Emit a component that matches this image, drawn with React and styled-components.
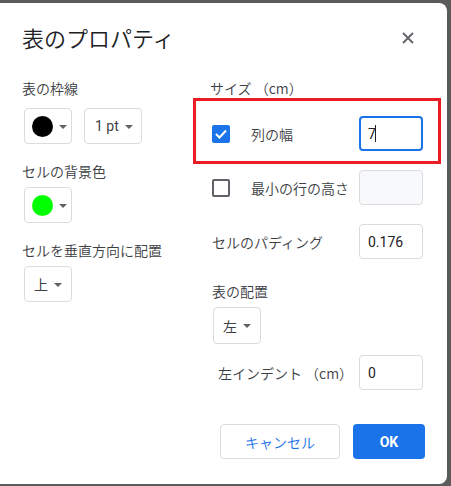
import React from "react";
import styled, { createGlobalStyle } from "styled-components";

const GlobalStyle = createGlobalStyle`
	html, body {
		margin: 0;
		padding: 0;
		background: #5b5b5b;
		font-family: Roboto, "Noto Sans CJK JP", sans-serif;
	}
	#root {
		height: 486px;
		overflow: hidden;
	}
`;

export default function App() {
	return (
		<>
			<GlobalStyle />
			<Backdrop>
				<Dialog>
					<Header>
						<Title>表のプロパティ</Title>
						<CloseButton aria-label="閉じる">
							<svg width="12" height="12" viewBox="0 0 12 12">
								<path d="M1 1 L11 11 M11 1 L1 11" stroke="#5f6368" strokeWidth="1.8" />
							</svg>
						</CloseButton>
					</Header>
					<Body>
						<LeftColumn>
							<Group spacing={12}>
								<Label>表の枠線</Label>
								<ButtonRow>
									<Dropdown>
										<Swatch color="#000000" />
										<Caret />
									</Dropdown>
									<Dropdown wide>
										<DropText>1 pt</DropText>
										<Caret />
									</Dropdown>
								</ButtonRow>
							</Group>
							<Group>
								<Label>セルの背景色</Label>
								<ButtonRow>
									<Dropdown>
										<Swatch color="#00ff00" />
										<Caret />
									</Dropdown>
								</ButtonRow>
							</Group>
							<Group>
								<Label>セルを垂直方向に配置</Label>
								<ButtonRow>
									<Dropdown>
										<DropText>上</DropText>
										<Caret />
									</Dropdown>
								</ButtonRow>
							</Group>
						</LeftColumn>
						<RightColumn>
							<Label>サイズ （cm）</Label>
							<Highlight>
								<FieldRow>
									<Checkbox checked>
										<svg width="12" height="10" viewBox="0 0 12 10">
											<path d="M1 5 L4.5 8.5 L11 1.5" fill="none" stroke="#fff" strokeWidth="2" />
										</svg>
									</Checkbox>
									<FieldLabel>列の幅</FieldLabel>
									<Input focused>
										7<CaretLine />
									</Input>
								</FieldRow>
							</Highlight>
							<FieldRow top={19}>
								<Checkbox />
								<FieldLabel>最小の行の高さ</FieldLabel>
								<Input disabled />
							</FieldRow>
							<FieldRow top={19}>
								<FieldLabel flush>セルのパディング</FieldLabel>
								<Input>0.176</Input>
							</FieldRow>
							<Label top={24}>表の配置</Label>
							<Dropdown indent>
								<DropText>左</DropText>
								<Caret />
							</Dropdown>
							<FieldRow top={11}>
								<FieldLabel flush indent>
									左インデント （cm）
								</FieldLabel>
								<Input>0</Input>
							</FieldRow>
						</RightColumn>
					</Body>
					<Footer>
						<CancelButton>キャンセル</CancelButton>
						<OkButton>OK</OkButton>
					</Footer>
				</Dialog>
			</Backdrop>
		</>
	);
}

const Backdrop = styled.div`
	padding-top: 3px;
`;

const Dialog = styled.div`
	width: 447px;
	height: 481px;
	box-sizing: border-box;
	background: #fff;
	border-radius: 0 8px 8px 0;
	padding: 0 22px;
	display: flex;
	flex-direction: column;
`;

const Header = styled.div`
	display: flex;
	align-items: center;
	justify-content: space-between;
	padding-top: 20px;
	height: 28px;
`;

const Title = styled.h1`
	margin: 0;
	font-size: 22px;
	font-weight: 350;
	line-height: 28px;
	color: #202124;
	font-family: "Noto Sans CJK JP", sans-serif;
`;

const CloseButton = styled.div`
	width: 24px;
	height: 24px;
	display: flex;
	align-items: center;
	justify-content: center;
	margin-right: 5px;
	margin-top: 2px;
`;

const Body = styled.div`
	display: grid;
	grid-template-columns: 188px 1fr;
	margin-top: 29px;
`;

const LeftColumn = styled.div`
	display: flex;
	flex-direction: column;
	gap: 19px;
`;

const RightColumn = styled.div`
	display: flex;
	flex-direction: column;
	align-items: flex-start;
	padding-right: 2px;
`;

const Group = styled.div`
	display: flex;
	flex-direction: column;
	gap: ${(p) => p.spacing || 8}px;
`;

const Label = styled.div`
	font-size: 14px;
	font-weight: 350;
	line-height: 16px;
	color: #3c4043;
	font-family: "Noto Sans CJK JP", sans-serif;
	margin-top: ${(p) => p.top || 0}px;
	margin-left: ${(p) => (p.top ? 2 : 0)}px;
`;

const ButtonRow = styled.div`
	display: flex;
	gap: 12px;
	padding-left: 2px;
`;

const Dropdown = styled.div`
	box-sizing: border-box;
	width: ${(p) => (p.wide ? 58 : 48)}px;
	height: ${(p) => (p.indent ? 37 : 36)}px;
	border: 1px solid #dadce0;
	border-radius: 4px;
	display: flex;
	align-items: center;
	padding-left: ${(p) => (p.wide ? 8 : 7)}px;
	gap: 6px;
	margin-top: ${(p) => (p.indent ? 8 : 0)}px;
	margin-left: ${(p) => (p.indent ? 3 : 0)}px;
`;

const Swatch = styled.span`
	width: 21px;
	height: 21px;
	border-radius: 50%;
	background: ${(p) => p.color};
`;

const DropText = styled.span`
	font-size: 14px;
	color: #3c4043;
	font-family: Roboto, "Noto Sans CJK JP", sans-serif;
	padding-left: 2px;
`;

const Caret = styled.span`
	width: 0;
	height: 0;
	border-left: 4px solid transparent;
	border-right: 4px solid transparent;
	border-top: 4px solid #5f6368;
	margin-top: 1px;
`;

const Highlight = styled.div`
	position: relative;
	width: 100%;
	margin-top: 20px;
	&::after {
		content: "";
		position: absolute;
		left: -17px;
		right: -18px;
		top: -18px;
		bottom: -13px;
		border: 3px solid #ec1c24;
		pointer-events: none;
	}
`;

const FieldRow = styled.div`
	display: flex;
	align-items: center;
	width: 100%;
	height: 35px;
	padding-left: 2px;
	box-sizing: border-box;
	margin-top: ${(p) => p.top || 0}px;
`;

const Checkbox = styled.div`
	box-sizing: border-box;
	width: 18px;
	height: 18px;
	border-radius: 2px;
	border: 2px solid ${(p) => (p.checked ? "#1a73e8" : "#5f6368")};
	background: ${(p) => (p.checked ? "#1a73e8" : "#fff")};
	display: flex;
	align-items: center;
	justify-content: center;
	flex-shrink: 0;
`;

const FieldLabel = styled.div`
	flex: 1;
	font-size: 14px;
	font-weight: 350;
	color: #3c4043;
	font-family: "Noto Sans CJK JP", sans-serif;
	margin-left: ${(p) => (p.flush ? (p.indent ? 6 : 0) : 21)}px;
	white-space: nowrap;
`;

const Input = styled.div`
	box-sizing: border-box;
	width: 64px;
	height: 35px;
	border-radius: 4px;
	border: ${(p) => (p.focused ? "2px solid #1a73e8" : "1px solid #dadce0")};
	background: ${(p) => (p.disabled ? "#f8f9fa" : "#fff")};
	display: flex;
	align-items: center;
	padding-left: ${(p) => (p.focused ? 7 : 8)}px;
	font-size: 14px;
	color: #202124;
	font-family: Roboto, sans-serif;
`;

const CaretLine = styled.span`
	width: 1px;
	height: 17px;
	background: #202124;
	margin-left: -1px;
`;

const Footer = styled.div`
	display: flex;
	justify-content: flex-end;
	gap: 13px;
	margin-top: 34px;
`;

const FooterButton = styled.div`
	box-sizing: border-box;
	height: 35px;
	border-radius: 4px;
	display: flex;
	align-items: center;
	justify-content: center;
	font-size: 14px;
	font-weight: 500;
`;

const CancelButton = styled(FooterButton)`
	width: 120px;
	border: 1px solid #dadce0;
	color: #1a73e8;
	font-family: "Noto Sans CJK JP", sans-serif;
	font-weight: 350;
`;

const OkButton = styled(FooterButton)`
	width: 72px;
	background: #1a73e8;
	color: #fff;
	font-weight: 700;
	font-family: Roboto, sans-serif;
`;
